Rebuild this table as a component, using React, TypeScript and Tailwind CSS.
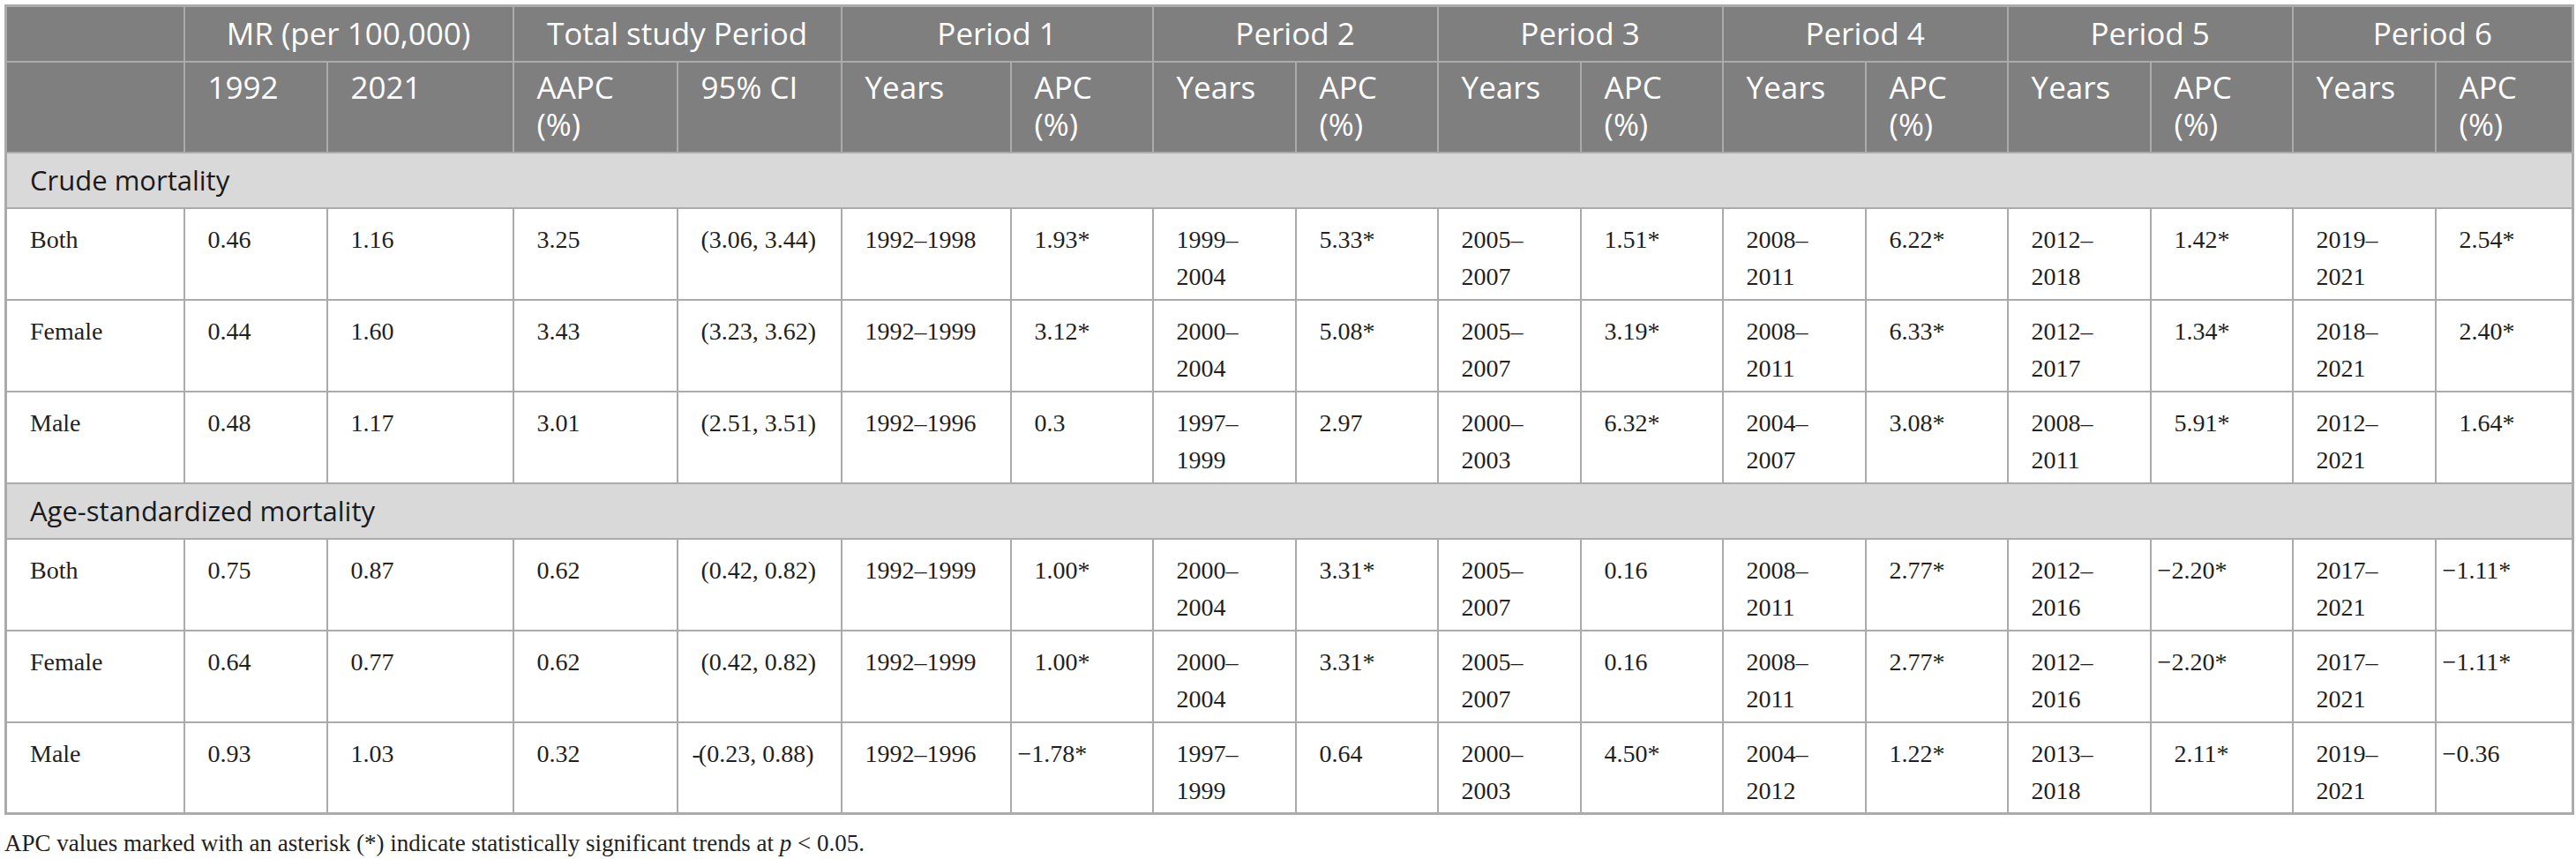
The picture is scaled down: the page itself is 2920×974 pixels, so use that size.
const PERIODS = ['Period 1', 'Period 2', 'Period 3', 'Period 4', 'Period 5', 'Period 6'];

const COL_WIDTHS = [202, 162, 211, 186, 186, 192, 161, 162, 161, 162, 161, 162, 161, 162, 161, 162, 156];

type Row = { label: string; cells: string[] };

const GROUPS: { title: string; rows: Row[] }[] = [
  {
    title: 'Crude mortality',
    rows: [
      { label: 'Both', cells: ['0.46', '1.16', '3.25', '(3.06, 3.44)', '1992–1998', '1.93*', '1999–2004', '5.33*', '2005–2007', '1.51*', '2008–2011', '6.22*', '2012–2018', '1.42*', '2019–2021', '2.54*'] },
      { label: 'Female', cells: ['0.44', '1.60', '3.43', '(3.23, 3.62)', '1992–1999', '3.12*', '2000–2004', '5.08*', '2005–2007', '3.19*', '2008–2011', '6.33*', '2012–2017', '1.34*', '2018–2021', '2.40*'] },
      { label: 'Male', cells: ['0.48', '1.17', '3.01', '(2.51, 3.51)', '1992–1996', '0.3', '1997–1999', '2.97', '2000–2003', '6.32*', '2004–2007', '3.08*', '2008–2011', '5.91*', '2012–2021', '1.64*'] },
    ],
  },
  {
    title: 'Age-standardized mortality',
    rows: [
      { label: 'Both', cells: ['0.75', '0.87', '0.62', '(0.42, 0.82)', '1992–1999', '1.00*', '2000–2004', '3.31*', '2005–2007', '0.16', '2008–2011', '2.77*', '2012–2016', '−2.20*', '2017–2021', '−1.11*'] },
      { label: 'Female', cells: ['0.64', '0.77', '0.62', '(0.42, 0.82)', '1992–1999', '1.00*', '2000–2004', '3.31*', '2005–2007', '0.16', '2008–2011', '2.77*', '2012–2016', '−2.20*', '2017–2021', '−1.11*'] },
      { label: 'Male', cells: ['0.93', '1.03', '0.32', '-(0.23, 0.88)', '1992–1996', '−1.78*', '1997–1999', '0.64', '2000–2003', '4.50*', '2004–2012', '1.22*', '2013–2018', '2.11*', '2019–2021', '−0.36'] },
    ],
  },
];

function CellText({ value, index }: { value: string; index: number }) {
  // cells 7, 9, 11, 13, 15 are the year ranges of periods 2-6, which wrap after the dash
  if (index >= 7 && index % 2 === 1 && value.includes('–')) {
    const [a, b] = value.split('–');
    return (
      <>
        {a}–<br />
        {b}
      </>
    );
  }
  if (value.startsWith('-(')) {
    return (
      <>
        <span className="-ml-[10px] -mr-[2px]">-</span>
        {value.slice(1)}
      </>
    );
  }
  return <>{value}</>;
}

export default function App() {
  const hd = 'border-2 border-[#ababab] text-white font-normal';
  const td = 'border-2 border-[#ababab] align-top pt-[14px] pb-0 h-[104px] whitespace-nowrap';

  return (
    <div className="w-[2920px] h-[974px] bg-white pl-[5px] pt-[5px] text-[#231f20]">
      <table className="table-fixed border-collapse border-[3px] border-[#ababab] w-[2910px]">
        <colgroup>
          {COL_WIDTHS.map((w, i) => (
            <col key={i} style={{ width: w }} />
          ))}
        </colgroup>
        <thead className="bg-[#7f7f7f] font-['Open_Sans',sans-serif] text-[35px] leading-[42px]">
          <tr className="h-[63px]">
            <th className={hd} />
            <th colSpan={2} className={`${hd} text-center align-middle`}>MR (per 100,000)</th>
            <th colSpan={2} className={`${hd} text-center align-middle`}>Total study Period</th>
            {PERIODS.map((p) => (
              <th key={p} colSpan={2} className={`${hd} text-center align-middle`}>
                {p}
              </th>
            ))}
          </tr>
          <tr className="h-[103px]">
            <th className={hd} />
            <th className={`${hd} text-left align-top pl-[26px] pt-[7px]`}>1992</th>
            <th className={`${hd} text-left align-top pl-[26px] pt-[7px]`}>2021</th>
            <th className={`${hd} text-left align-top pl-[26px] pt-[7px]`}>
              AAPC
              <br />
              (%)
            </th>
            <th className={`${hd} text-left align-top pl-[26px] pt-[7px]`}>95% CI</th>
            {PERIODS.map((p) => (
              <>
                <th key={p + 'y'} className={`${hd} text-left align-top pl-[26px] pt-[7px]`}>Years</th>
                <th key={p + 'a'} className={`${hd} text-left align-top pl-[26px] pt-[7px]`}>
                  APC
                  <br />
                  (%)
                </th>
              </>
            ))}
          </tr>
        </thead>
        <tbody className="font-['Liberation_Serif',serif] text-[28px] leading-[42px]">
          {GROUPS.map((g) => (
            <>
              <tr key={g.title} className="h-[63px] bg-[#d9d9d9]">
                <td
                  colSpan={17}
                  className="border-2 border-[#ababab] pl-[26px] align-middle font-['Open_Sans',sans-serif] text-[31px] leading-[42px] text-[#1a1a1a]"
                >
                  {g.title}
                </td>
              </tr>
              {g.rows.map((r) => (
                <tr key={g.title + r.label}>
                  <td className={`${td} pl-[26px]`}>{r.label}</td>
                  {r.cells.map((c, i) => (
                    <td key={i} className={`${td} ${c.startsWith('−') ? 'pl-[7px]' : 'pl-[26px]'}`}>
                      <CellText value={c} index={i + 1} />
                    </td>
                  ))}
                </tr>
              ))}
            </>
          ))}
        </tbody>
      </table>
      <p className="mt-[11px] font-['Liberation_Serif',serif] text-[27px] leading-[42px] text-[#231f20]">
        APC values marked with an asterisk (*) indicate statistically significant trends at <i>p</i> &lt; 0.05.
      </p>
    </div>
  );
}
